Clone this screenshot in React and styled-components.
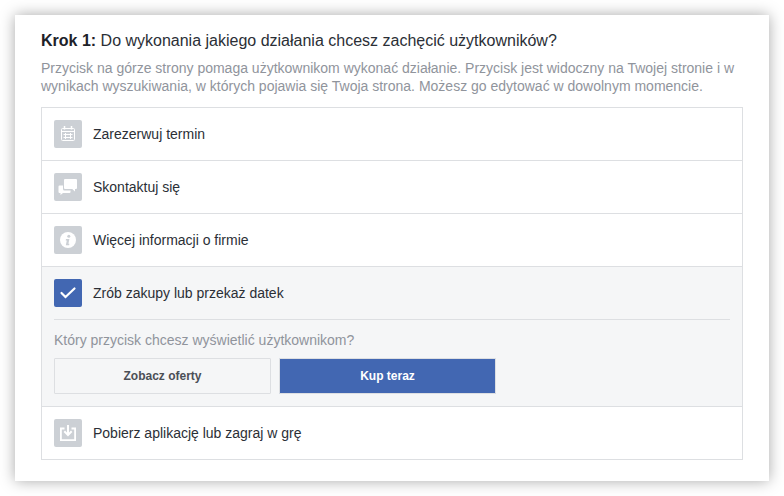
import React from 'react';
import styled, { createGlobalStyle } from 'styled-components';

const GlobalStyle = createGlobalStyle`
  html, body {
    margin: 0;
    padding: 0;
    background: #fff;
    font-family: "Liberation Sans", Arial, sans-serif;
  }
`;

const Page = styled.div`
  width: 784px;
  height: 496px;
  padding: 15px;
  box-sizing: border-box;
  overflow: hidden;
`;

const Card = styled.section`
  width: 754px;
  height: 466px;
  box-sizing: border-box;
  padding: 16px 26px 0;
  background: #fff;
  box-shadow: 0 0 14px rgba(0, 0, 0, 0.34);
`;

const Title = styled.h2`
  margin: 0 0 8px;
  font-size: 16px;
  line-height: 20px;
  font-weight: 400;
  color: #2b2f36;

  strong {
    font-weight: 700;
    color: #1d2129;
  }
`;

const Description = styled.p`
  margin: 0 0 12px;
  font-size: 14px;
  line-height: 18px;
  color: #90949c;
`;

const Options = styled.div`
  border: 1px solid #dddfe2;
`;

const Option = styled.div`
  background: ${(p) => (p.$active ? '#f5f6f7' : '#fff')};
  padding: 0 12px;

  & + & {
    border-top: 1px solid #dddfe2;
  }
`;

const OptionHead = styled.div`
  height: 52px;
  display: flex;
  align-items: center;
  gap: 11px;
`;

const IconBox = styled.span`
  width: 28px;
  height: 28px;
  flex: none;
  display: flex;
  align-items: center;
  justify-content: center;
  border-radius: 2px;
  background: ${(p) => (p.$active ? '#4267b2' : '#ccd0d5')};

  svg {
    display: block;
  }
`;

const OptionLabel = styled.span`
  font-size: 14px;
  color: #2b2f36;
`;

const Details = styled.div`
  border-top: 1px solid #dddfe2;
  padding: 11px 0 12px;
`;

const Question = styled.p`
  margin: 0 0 9px;
  font-size: 14px;
  line-height: 18px;
  color: #90949c;
`;

const Buttons = styled.div`
  display: flex;
  gap: 8px;
`;

const ChoiceButton = styled.button`
  width: 217px;
  height: 36px;
  padding: 0;
  box-sizing: border-box;
  border: 1px solid #dddfe2;
  border-radius: 1px;
  background: ${(p) => (p.$primary ? '#4267b2' : '#f5f6f7')};
  color: ${(p) => (p.$primary ? '#fff' : '#4b4f56')};
  font-family: inherit;
  font-size: 12px;
  font-weight: 700;
`;

const CalendarIcon = () => (
  <svg width="18" height="18" viewBox="0 0 18 18" fill="none" stroke="#fff" strokeWidth="1">
    <rect x="2.500" y="3.500" width="13" height="12" rx="1" />
    <path d="M2.500 6.500h13M4.500 9.500h9M4.500 12.500h9M6.500 8v6M11.500 8v6" />
    <path d="M5.500 1v3.500M12.500 1v3.500" strokeWidth="1.500" />
  </svg>
);

const ChatIcon = () => (
  <svg width="20" height="18" viewBox="0 0 20 18" fill="#fff">
    <path d="M7 1h11a1 1 0 0 1 1 1v8a1 1 0 0 1-1 1h-1v2.600L14.200 11H7a1 1 0 0 1-1-1V2a1 1 0 0 1 1-1z" />
    <path d="M1.500 7.500H5V11a1.500 1.500 0 0 0 1.500 1.500h6V14a1 1 0 0 1-1 1H5l-2.500 2v-2h-1a1 1 0 0 1-1-1V8.500a1 1 0 0 1 1-1z" />
  </svg>
);

const InfoIcon = () => (
  <svg width="18" height="18" viewBox="0 0 18 18">
    <circle cx="9" cy="9" r="8" fill="#fff" />
    <circle cx="9.800" cy="5.200" r="1.500" fill="#ccd0d5" />
    <path d="M7 8h3.400l-1 4.800h1l-.3 1.500H6.800l1-4.800H6.700z" fill="#ccd0d5" />
  </svg>
);

const CheckIcon = () => (
  <svg width="18" height="18" viewBox="0 0 18 18" fill="none" stroke="#fff" strokeWidth="2.200" strokeLinecap="round">
    <path d="M2.500 9l4 4L15.500 4.500" />
  </svg>
);

const DownloadIcon = () => (
  <svg width="18" height="18" viewBox="0 0 18 18" fill="none" stroke="#fff" strokeWidth="1.800">
    <path d="M5.500 4.500H1.900v11.600h14.200V4.500h-3.600" />
    <path d="M9 1v9.500M5.300 7.300 9 11l3.700-3.700" strokeWidth="2" />
  </svg>
);

export default function App() {
  return (
    <>
      <GlobalStyle />
      <Page>
        <Card>
          <Title>
            <strong>Krok 1:</strong> Do wykonania jakiego działania chcesz zachęcić użytkowników?
          </Title>
          <Description>
            Przycisk na górze strony pomaga użytkownikom wykonać działanie. Przycisk jest widoczny na Twojej stronie i w
            wynikach wyszukiwania, w których pojawia się Twoja strona. Możesz go edytować w dowolnym momencie.
          </Description>
          <Options>
            <Option>
              <OptionHead>
                <IconBox><CalendarIcon /></IconBox>
                <OptionLabel>Zarezerwuj termin</OptionLabel>
              </OptionHead>
            </Option>
            <Option>
              <OptionHead>
                <IconBox><ChatIcon /></IconBox>
                <OptionLabel>Skontaktuj się</OptionLabel>
              </OptionHead>
            </Option>
            <Option>
              <OptionHead>
                <IconBox><InfoIcon /></IconBox>
                <OptionLabel>Więcej informacji o firmie</OptionLabel>
              </OptionHead>
            </Option>
            <Option $active>
              <OptionHead>
                <IconBox $active><CheckIcon /></IconBox>
                <OptionLabel>Zrób zakupy lub przekaż datek</OptionLabel>
              </OptionHead>
              <Details>
                <Question>Który przycisk chcesz wyświetlić użytkownikom?</Question>
                <Buttons>
                  <ChoiceButton>Zobacz oferty</ChoiceButton>
                  <ChoiceButton $primary>Kup teraz</ChoiceButton>
                </Buttons>
              </Details>
            </Option>
            <Option>
              <OptionHead>
                <IconBox><DownloadIcon /></IconBox>
                <OptionLabel>Pobierz aplikację lub zagraj w grę</OptionLabel>
              </OptionHead>
            </Option>
          </Options>
        </Card>
      </Page>
    </>
  );
}
